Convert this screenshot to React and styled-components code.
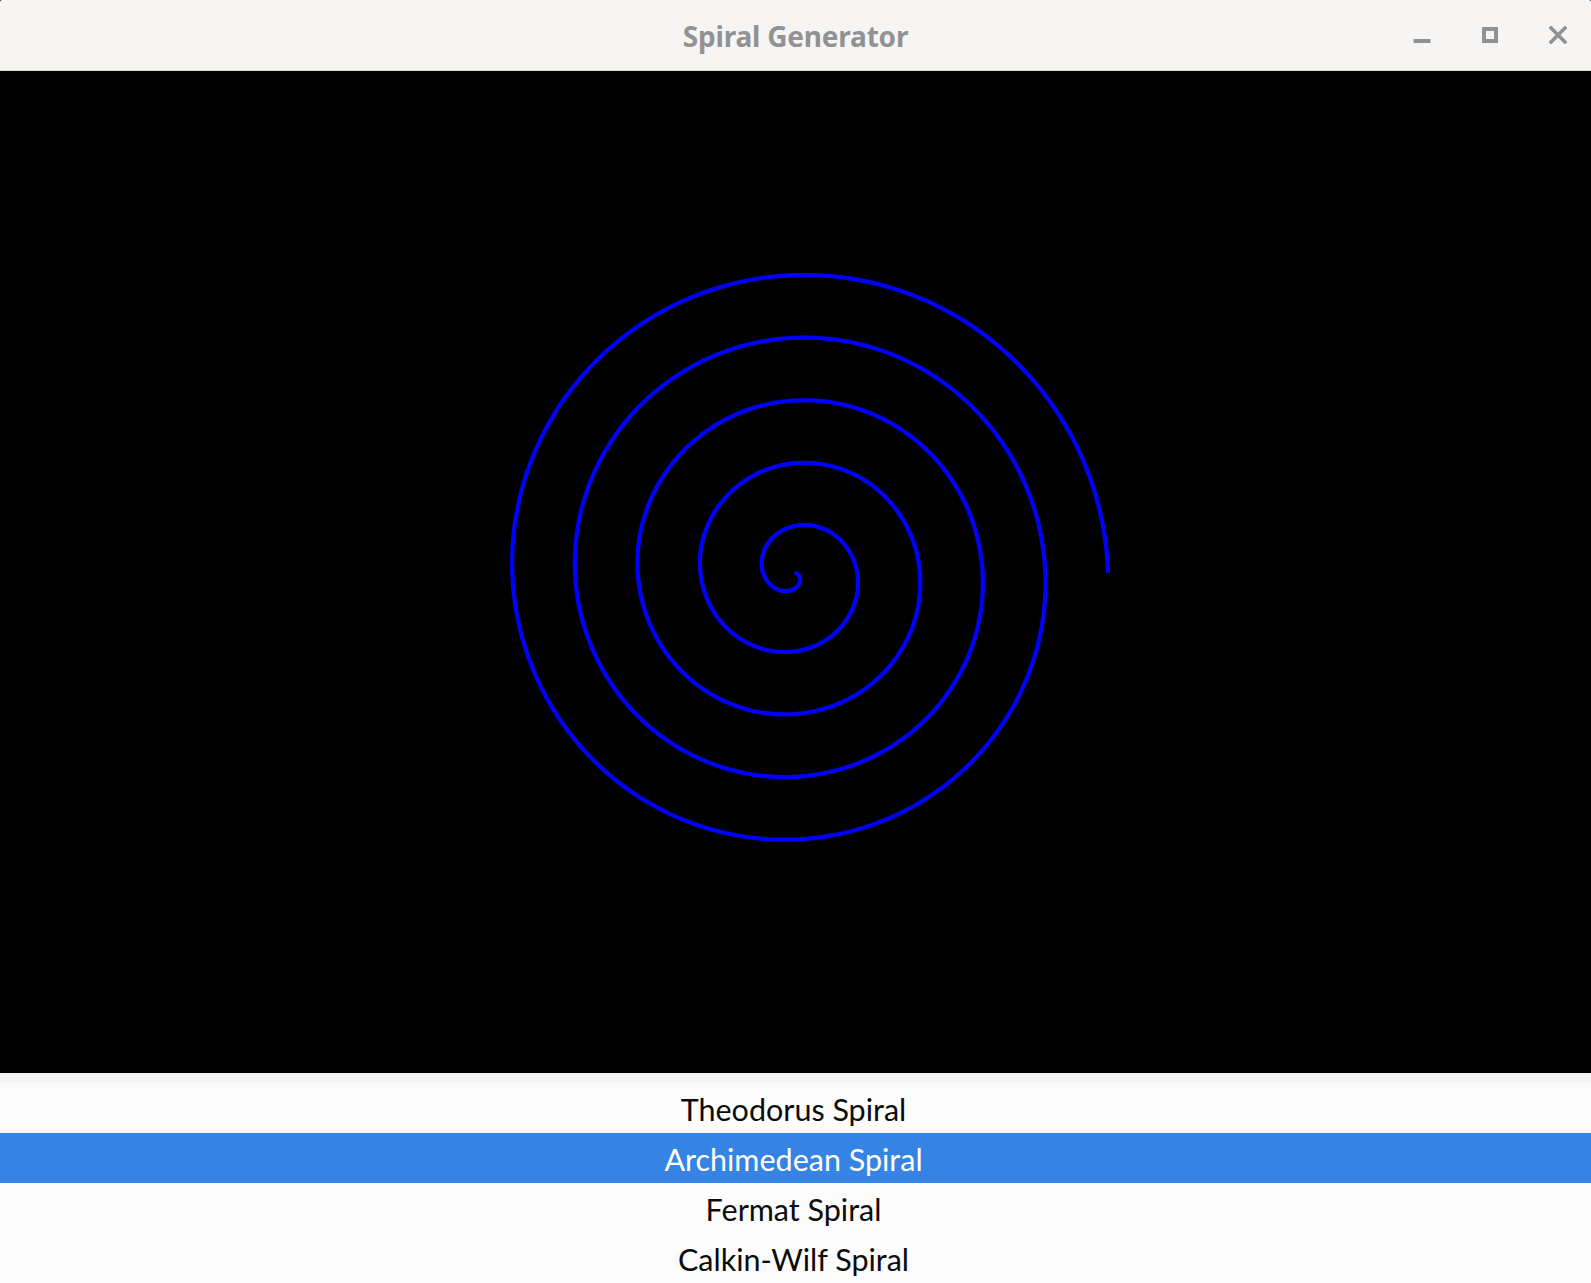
import React, { useMemo } from 'react';
import styled, { createGlobalStyle } from 'styled-components';

const GlobalStyle = createGlobalStyle`
  html, body {
    margin: 0;
    padding: 0;
    background: #2e2e2e;
  }
  #root {
    height: 100vh;
  }
`;

const Window = styled.div`
  display: flex;
  flex-direction: column;
  height: 100vh;
  background: #fcfcfc;
  border-radius: 3px 3px 0 0;
  overflow: hidden;
  font-family: 'Noto Sans', 'Open Sans', sans-serif;
`;

/* 타이틀 바 */
const TitleBar = styled.header`
  display: grid;
  grid-template-columns: 1fr auto 1fr;
  align-items: center;
  flex-shrink: 0;
  height: 70px;
  background: #f6f5f4;
  border-bottom: 1px solid #dcdad7;
`;

const Title = styled.h1`
  grid-column: 2;
  margin: 0;
  padding-top: 2px;
  font-size: 28px;
  font-weight: 700;
  color: #919293;
  letter-spacing: -0.2px;
`;

const Controls = styled.div`
  grid-column: 3;
  justify-self: end;
  display: flex;
  gap: 32px;
  margin-right: 15px;
`;

const ControlButton = styled.button`
  display: flex;
  align-items: center;
  justify-content: center;
  width: 36px;
  height: 36px;
  padding: 0;
  border: none;
  background: transparent;
  color: #8f9192;
`;

/* 그림 영역 */
const Canvas = styled.main`
  flex: 1;
  background: #000;
  min-height: 0;

  svg {
    display: block;
    width: 100%;
    height: 100%;
  }
`;

const Divider = styled.div`
  height: 10px;
  flex-shrink: 0;
  background: #f6f5f4;
`;

/* 목록 영역 */
const SpiralList = styled.ul`
  flex-shrink: 0;
  margin: 0;
  padding: 0;
  list-style: none;
`;

const SpiralItem = styled.li`
  display: flex;
  align-items: center;
  justify-content: center;
  height: 50px;
  padding: 2px 4px 0 0;
  box-sizing: border-box;
  font-family: Lato, 'Noto Sans', sans-serif;
  font-size: 30.5px;
  color: ${(p) => (p.$selected ? '#ffffff' : '#0b0b0b')};
  background: ${(p) => (p.$selected ? '#3584e4' : '#fcfcfc')};
`;

const W = 1591;
const H = 1002;

/* 아르키메데스 나선: r = a * theta */
function archimedeanPath(cx, cy, a, turns) {
  const steps = 2000;
  const max = turns * 2 * Math.PI;
  let d = '';
  for (let i = 0; i <= steps; i++) {
    const t = (i / steps) * max;
    const x = cx + a * t * Math.cos(t);
    const y = cy + a * t * Math.sin(t);
    d += `${i === 0 ? 'M' : 'L'}${x.toFixed(2)} ${y.toFixed(2)} `;
  }
  return d;
}

const spirals = ['Theodorus Spiral', 'Archimedean Spiral', 'Fermat Spiral', 'Calkin-Wilf Spiral'];

const App = () => {
  const path = useMemo(() => archimedeanPath(W / 2 - 1, H / 2 + 1, 9.98, 5), []);

  return (
    <>
      <GlobalStyle />
      <Window>
        <TitleBar>
          <Title>Spiral Generator</Title>
          <Controls>
            <ControlButton aria-label="minimize">
              <svg width="18" height="18" viewBox="0 0 18 18">
                <rect x="0.5" y="13" width="17" height="4" fill="currentColor" />
              </svg>
            </ControlButton>
            <ControlButton aria-label="maximize">
              <svg width="18" height="18" viewBox="0 0 18 18">
                <rect x="3" y="3" width="12" height="12" fill="none" stroke="currentColor" strokeWidth="4" />
              </svg>
            </ControlButton>
            <ControlButton aria-label="close">
              <svg width="18" height="18" viewBox="0 0 18 18">
                <path d="M2 2 L16 16 M16 2 L2 16" stroke="currentColor" strokeWidth="3.6" strokeLinecap="square" />
              </svg>
            </ControlButton>
          </Controls>
        </TitleBar>

        <Canvas>
          <svg viewBox={`0 0 ${W} ${H}`} preserveAspectRatio="xMidYMid meet">
            <path d={path} fill="none" stroke="#0000ff" strokeWidth="4.2" strokeLinejoin="round" />
          </svg>
        </Canvas>

        <Divider />

        <SpiralList>
          {spirals.map((name) => (
            <SpiralItem key={name} $selected={name === 'Archimedean Spiral'}>
              {name}
            </SpiralItem>
          ))}
        </SpiralList>
      </Window>
    </>
  );
};

export default App;
